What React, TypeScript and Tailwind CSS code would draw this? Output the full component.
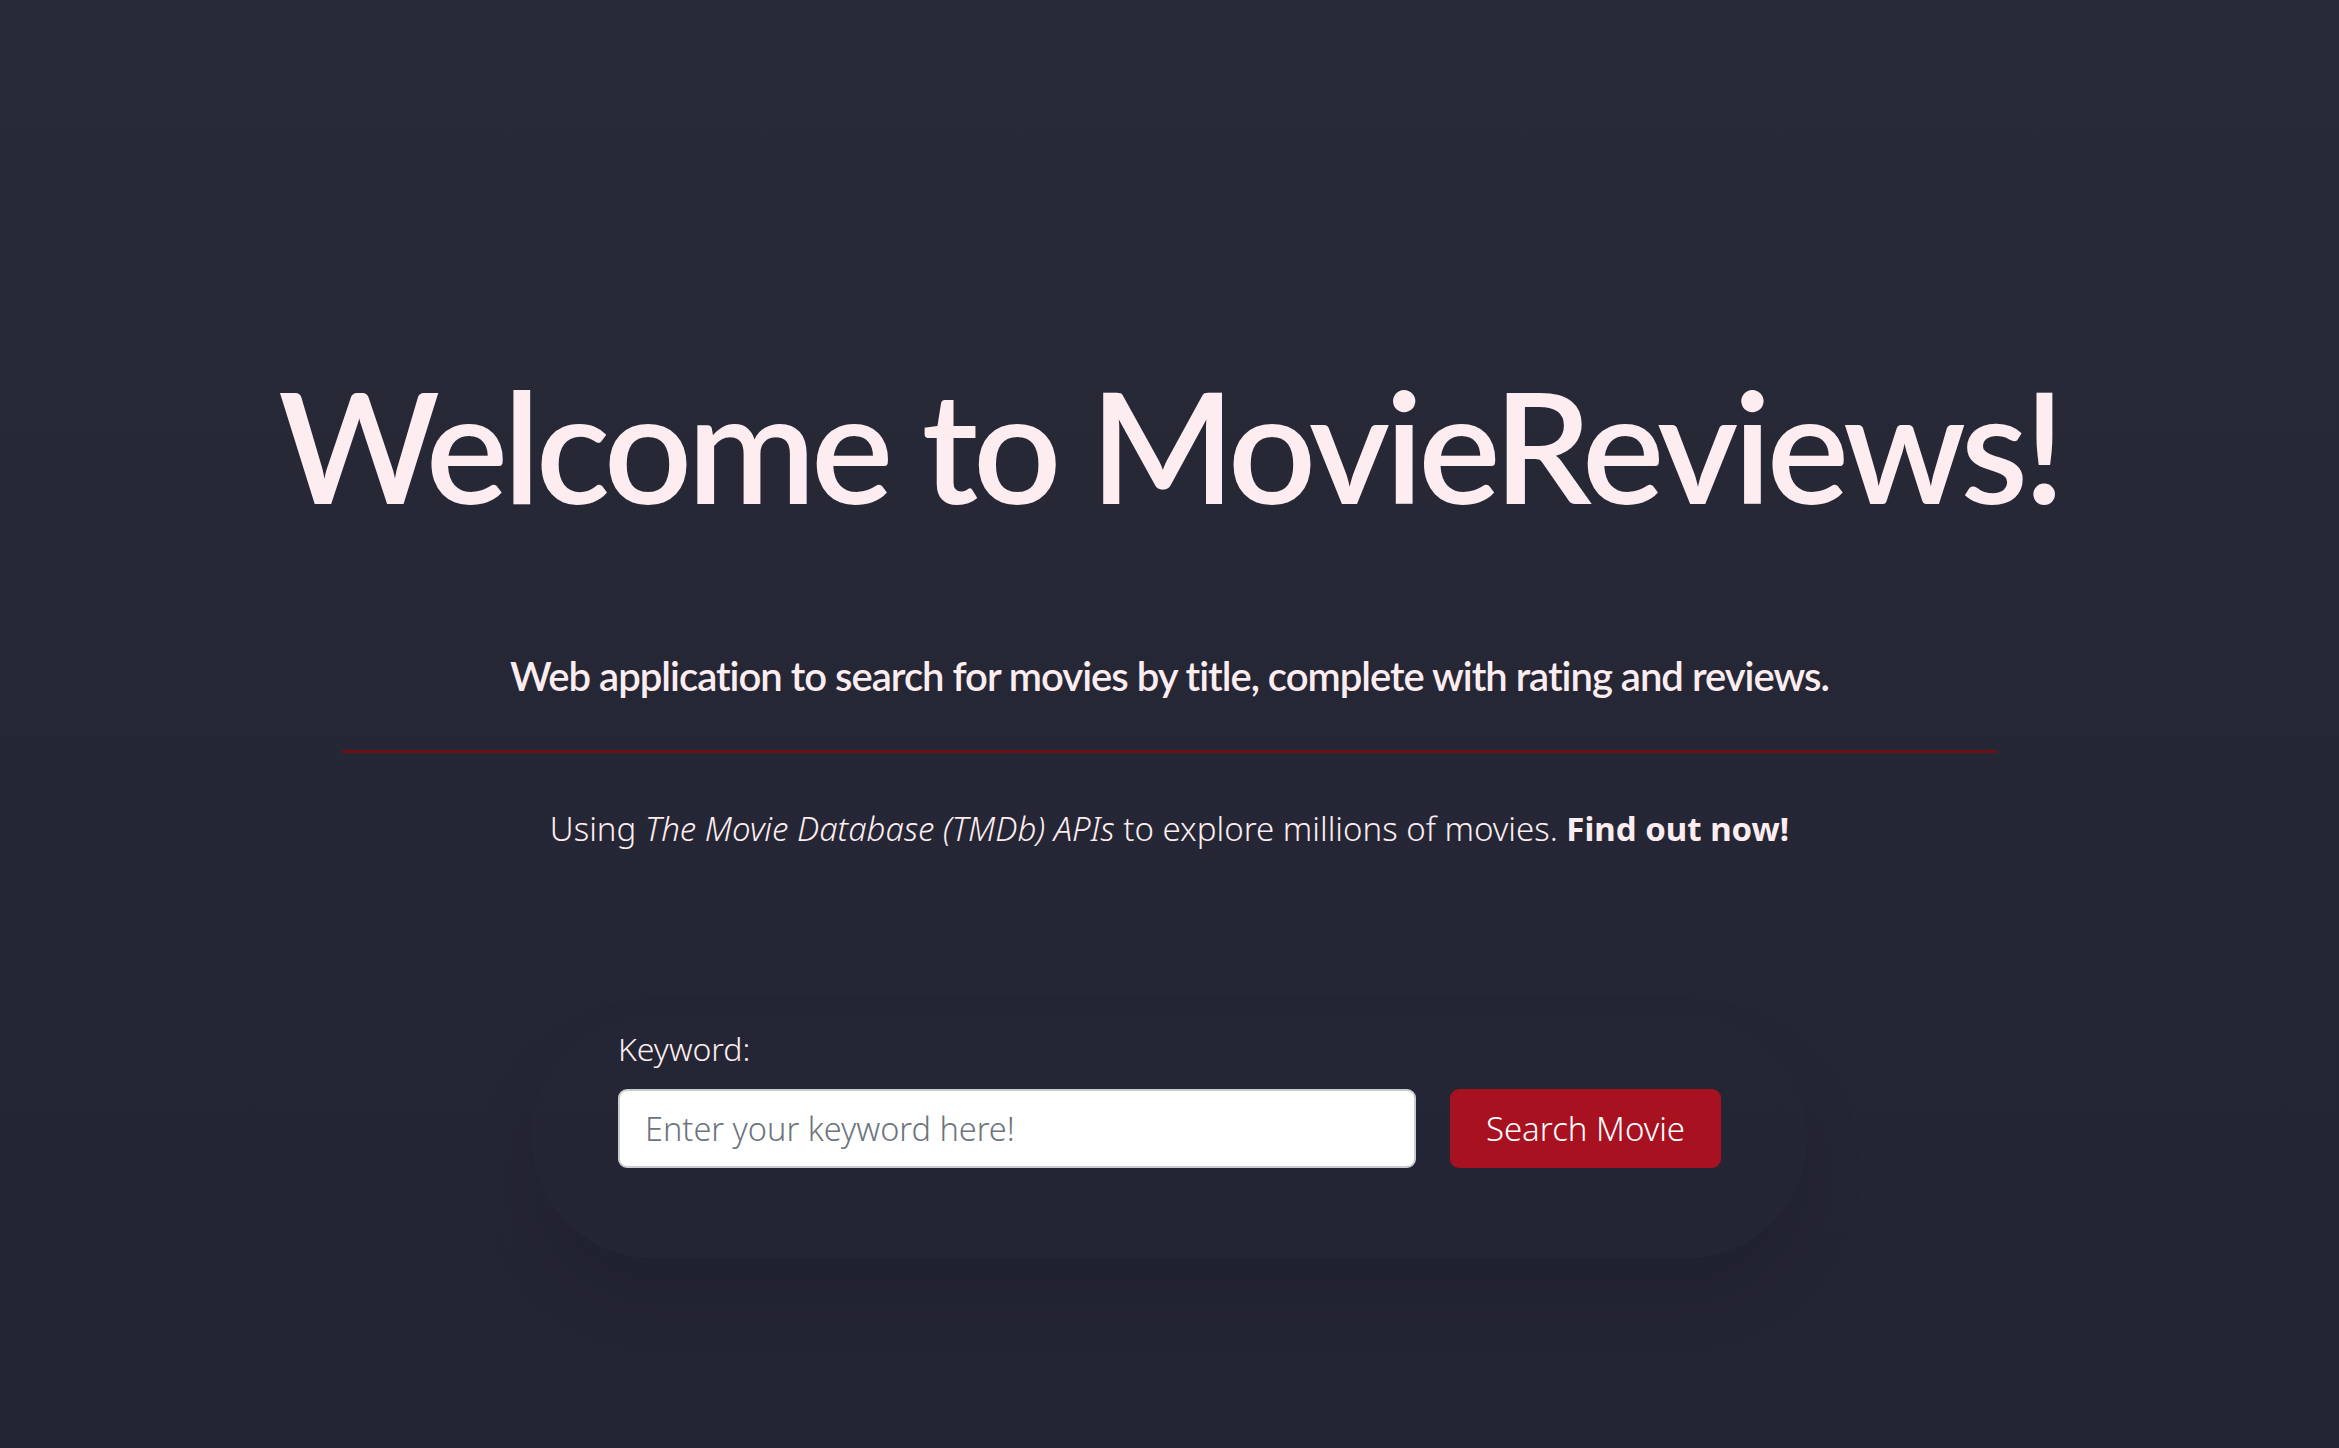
export default function App() {
  return (
    <div className="min-h-screen w-full bg-gradient-to-b from-[#282a37] to-[#232434] flex flex-col items-center text-[#fdedf0]">
      <h1
        className="mt-[367px] text-[155px] leading-none font-semibold tracking-[-5px]"
        style={{ fontFamily: "Lato, 'Noto Sans', sans-serif" }}
      >
        Welcome to MovieReviews!
      </h1>

      <p
        className="mt-[134px] text-[40px] leading-none font-semibold tracking-[-1px]"
        style={{ fontFamily: "Lato, 'Noto Sans', sans-serif" }}
      >
        Web application to search for movies by title, complete with rating and reviews.
      </p>

      <hr className="mt-[54px] w-[1655px] border-0 border-t-[3px] border-[#6e0f18]" />

      <p
        className="mt-[59px] text-[33px] leading-none font-light"
        style={{ fontFamily: "'Noto Sans', 'Open Sans', sans-serif" }}
      >
        Using <em>The Movie Database (TMDb) APIs</em> to explore millions of movies.{" "}
        <strong className="font-bold">Find out now!</strong>
      </p>

      <div className="mt-[168px] w-[1275px] rounded-[120px] px-[86px] pt-[20px] pb-[90px] shadow-[0_40px_70px_rgba(0,0,0,0.09)]">
        <form
          className="flex flex-col"
          style={{ fontFamily: "'Noto Sans', 'Open Sans', sans-serif" }}
          onSubmit={(e) => e.preventDefault()}
        >
          <label htmlFor="keyword" className="text-[32px] leading-none font-light">
            Keyword:
          </label>
          <div className="mt-[24px] flex items-center gap-[34px]">
            <input
              id="keyword"
              type="text"
              placeholder="Enter your keyword here!"
              className="w-[798px] h-[79px] rounded-[9px] border-2 border-[#c9cdd2] bg-white pl-[25px] pr-4 text-[32.5px] font-light text-[#212529] placeholder:text-[#6c757d] outline-none"
            />
            <button
              type="submit"
              className="w-[271px] h-[79px] rounded-[9px] bg-[#a8111f] text-white text-[33px] font-light"
            >
              Search Movie
            </button>
          </div>
        </form>
      </div>
    </div>
  );
}
